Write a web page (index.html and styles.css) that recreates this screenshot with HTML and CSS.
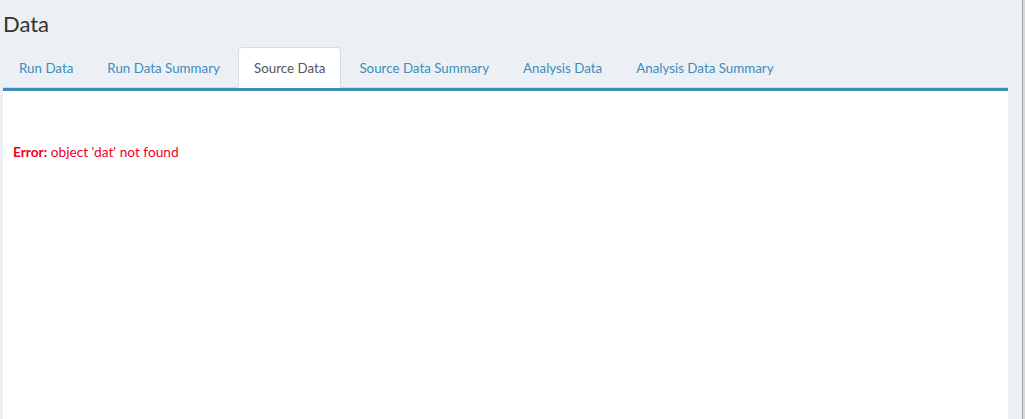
FILE: index.html
```html
<!DOCTYPE html>
<html>
<head>
<meta charset="utf-8">
<title>Data</title>
<link rel="stylesheet" href="styles.css">
</head>
<body>
<div class="page">
  <div class="main">
    <h2 class="title">Data</h2>
    <ul class="tabs">
      <li class="tab"><a>Run Data</a></li>
      <li class="tab"><a>Run Data Summary</a></li>
      <li class="tab active"><a>Source Data</a></li>
      <li class="tab"><a>Source Data Summary</a></li>
      <li class="tab"><a>Analysis Data</a></li>
      <li class="tab"><a>Analysis Data Summary</a></li>
    </ul>
    <div class="panel">
      <div class="error"><b>Error:</b> object 'dat' not found</div>
    </div>
  </div>
  <div class="edge"></div>
</div>
</body>
</html>
```

FILE: styles.css
```css
html, body {
  margin: 0;
  padding: 0;
  height: 100%;
}
body {
  background: #ecf0f5;
  font-family: Lato, "Open Sans", "Liberation Sans", sans-serif;
  font-size: 14px;
  color: #333;
  overflow: hidden;
}
.page {
  display: flex;
  height: 419px;
}
.main {
  width: 1005px;
  padding-left: 3px;
  display: flex;
  flex-direction: column;
}
.title {
  margin: 9px 0 0 0;
  font-size: 22px;
  font-weight: 400;
  line-height: 30px;
  color: #333;
}
.tabs {
  list-style: none;
  margin: 8px 0 0 0;
  padding: 0;
  display: flex;
  border-bottom: 1px solid #d2d6de;
}
.tab {
  margin-right: 2px;
  margin-bottom: -1px;
  border: 1px solid transparent;
  border-radius: 4px 4px 0 0;
}
.tab a {
  display: block;
  padding: 11px 15px 9px 15px;
  line-height: 19px;
  font-size: 13.35px;
  color: #3c8dbc;
}
.tab.active {
  background: #fff;
  border-color: #dcdcdc;
  border-bottom-color: #fff;
}
.tab.active a {
  color: #555;
}
.panel {
  flex: 1;
  background: #fff;
  border-top: 3px solid #3c8dbc;
  padding: 51px 10px 0 10px;
}
.error {
  color: #f00024;
  font-size: 13.7px;
  line-height: 20px;
}
.error b {
  font-weight: 700;
}
.edge {
  margin-left: 14px;
  width: 1px;
  background: #a8a8a8;
  border-right: 2px solid #d8d8d8;
}
```
